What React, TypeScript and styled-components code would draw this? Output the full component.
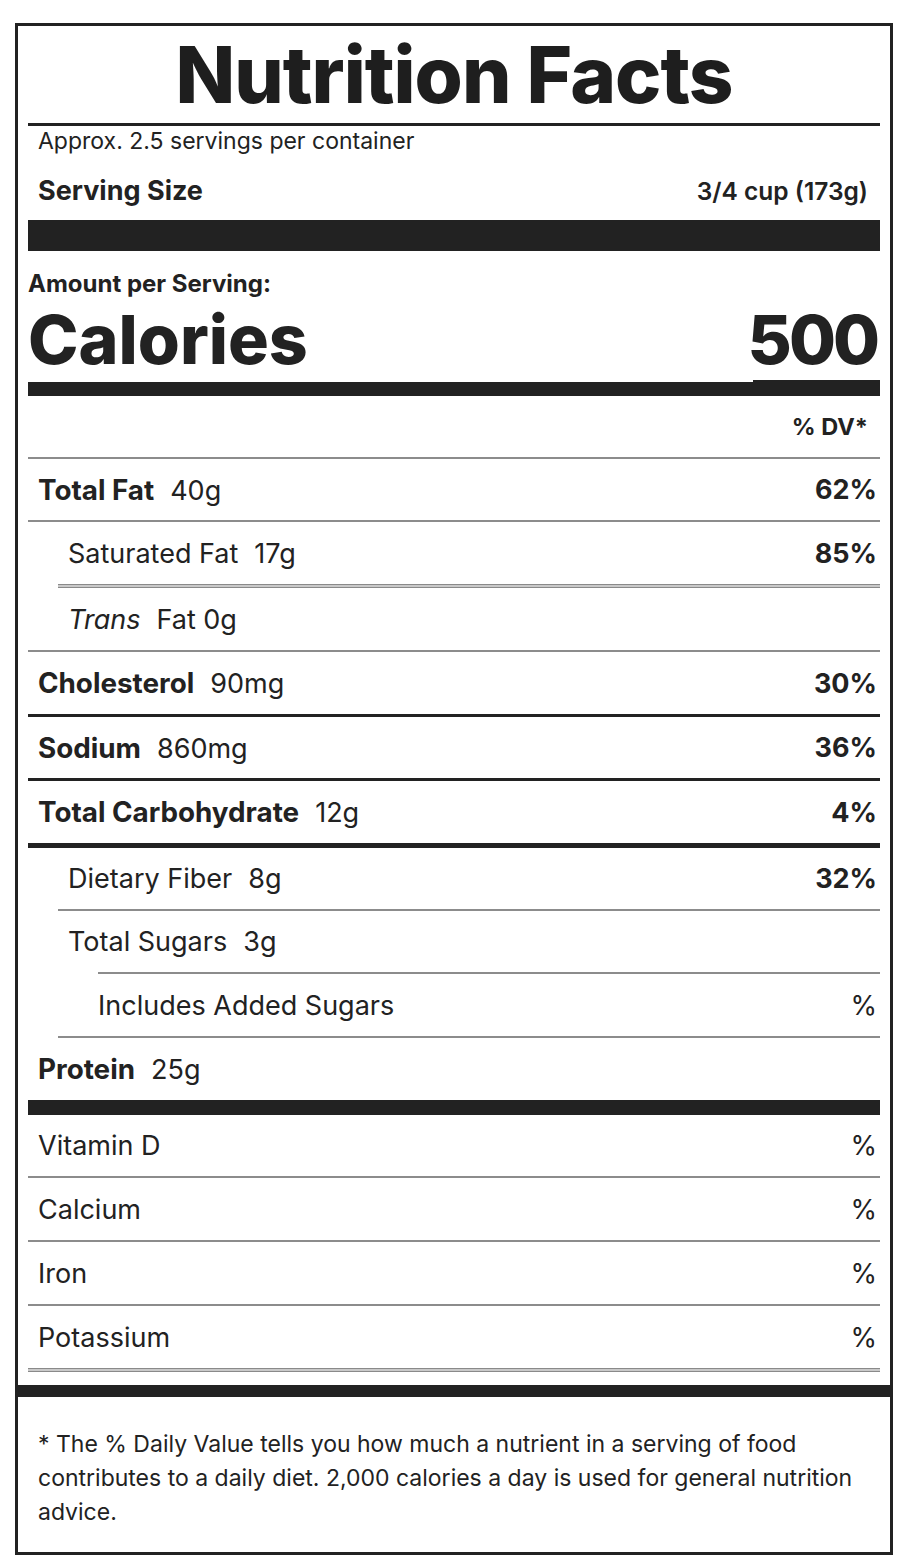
import React from "react";
import styled, { createGlobalStyle } from "styled-components";

const GlobalStyle = createGlobalStyle`
  html, body {
    margin: 0;
    padding: 0;
    background: #ffffff;
  }
  body {
    font-family: Inter, "Liberation Sans", Arial, sans-serif;
    color: #222222;
  }
  * { box-sizing: border-box; }
`;

const Page = styled.div`
  padding: 23px 21px 9px 15px;
`;

const Label = styled.div`
  width: 878px;
  border: 3px solid #222;
  background: #fff;
`;

const Body = styled.div`
  padding: 0 10px;
`;

const Title = styled.h1`
  margin: 0;
  height: 97px;
  line-height: 97px;
  text-align: center;
  font-size: 78px;
  font-weight: 800;
  letter-spacing: -1px;
  color: #1e1e1e;
`;

const Rule = styled.div<{ $h: number; $color?: string; $inset?: number }>`
  height: ${(p) => p.$h}px;
  background: ${(p) => p.$color ?? "#222"};
  margin-left: ${(p) => p.$inset ?? 0}px;
`;

const DoubleRule = styled.div<{ $inset?: number }>`
  height: 4px;
  border-top: 1px solid #8a8a8a;
  border-bottom: 1px solid #8a8a8a;
  background: #c9c9c9;
  margin-left: ${(p) => p.$inset ?? 0}px;
`;

const Servings = styled.div`
  padding-left: 10px;
  font-size: 23px;
  line-height: 30px;
  height: 30px;
`;

const ServingRow = styled.div`
  display: flex;
  justify-content: space-between;
  align-items: baseline;
  padding: 6px 12px 0 10px;
  height: 64px;
  line-height: 58px;
  font-size: 27px;
  font-weight: 700;
`;

const ServingValue = styled.span`
  font-size: 24.5px;
  font-weight: 600;
`;

const AmountLabel = styled.div`
  padding-top: 18px;
  font-size: 24px;
  line-height: 30px;
  font-weight: 700;
`;

const CaloriesRow = styled.div`
  display: flex;
  justify-content: space-between;
  align-items: baseline;
  padding-top: 5px;
  height: 81px;
  line-height: 70px;
  font-size: 68px;
  font-weight: 800;
`;

const CaloriesValue = styled.span`
  letter-spacing: -3px;
  margin-right: 3px;
`;

const StepBar = styled.div`
  display: flex;
  align-items: flex-end;
  height: 16px;
`;

const StepLeft = styled.div`
  flex: 1;
  height: 14px;
  background: #222;
`;

const StepRight = styled.div`
  width: 127px;
  height: 16px;
  background: #222;
`;

const DvHeader = styled.div`
  height: 61px;
  line-height: 61px;
  text-align: right;
  padding-right: 12px;
  font-size: 23.5px;
  font-weight: 700;
`;

const Row = styled.div<{ $indent: number; $h: number }>`
  display: flex;
  align-items: center;
  justify-content: space-between;
  height: ${(p) => p.$h}px;
  padding-left: ${(p) => 10 + p.$indent * 30}px;
  padding-right: 3px;
  font-size: 27px;
`;

const Name = styled.span<{ $bold?: boolean }>`
  font-weight: ${(p) => (p.$bold ? 700 : 400)};
  font-size: ${(p) => (p.$bold ? "27.8px" : "27px")};
`;

const Italic = styled.span`
  font-style: italic;
  margin-right: 16px;
`;

const Amount = styled.span`
  margin-left: 16px;
  font-weight: 400;
`;

const Percent = styled.span<{ $bold?: boolean }>`
  font-weight: ${(p) => (p.$bold ? 700 : 400)};
`;

const Footnote = styled.div`
  border-top: 12px solid #222;
  margin-top: 13px;
  padding: 30px 20px 23px 20px;
  font-size: 23px;
  line-height: 34px;
`;

type Line = "gray" | "double" | "black3" | "black5" | "bar";

interface Item {
  name: React.ReactNode;
  bold?: boolean;
  amount?: string;
  pct?: string;
  pctBold?: boolean;
  indent: number;
  line: Line;
  inset?: number;
  h: number;
}

const nutrients: Item[] = [
  { name: "Total Fat", bold: true, amount: "40g", pct: "62%", pctBold: true, indent: 0, line: "gray", h: 61 },
  { name: "Saturated Fat", amount: "17g", pct: "85%", pctBold: true, indent: 1, line: "double", inset: 30, h: 62 },
  { name: <><Italic>Trans</Italic>Fat 0g</>, indent: 1, line: "gray", h: 62 },
  { name: "Cholesterol", bold: true, amount: "90mg", pct: "30%", pctBold: true, indent: 0, line: "black3", h: 62 },
  { name: "Sodium", bold: true, amount: "860mg", pct: "36%", pctBold: true, indent: 0, line: "black3", h: 61 },
  { name: "Total Carbohydrate", bold: true, amount: "12g", pct: "4%", pctBold: true, indent: 0, line: "black5", h: 62 },
  { name: "Dietary Fiber", amount: "8g", pct: "32%", pctBold: true, indent: 1, line: "gray", inset: 30, h: 61 },
  { name: "Total Sugars", amount: "3g", indent: 1, line: "gray", inset: 70, h: 61 },
  { name: "Includes Added Sugars", pct: "%", indent: 2, line: "gray", inset: 30, h: 62 },
  { name: "Protein", bold: true, amount: "25g", indent: 0, line: "bar", h: 62 },
];

const vitamins: Item[] = [
  { name: "Vitamin D", pct: "%", indent: 0, line: "gray", h: 61 },
  { name: "Calcium", pct: "%", indent: 0, line: "gray", h: 62 },
  { name: "Iron", pct: "%", indent: 0, line: "gray", h: 62 },
  { name: "Potassium", pct: "%", indent: 0, line: "double", h: 62 },
];

function Divider({ line, inset }: { line: Line; inset?: number }) {
  switch (line) {
    case "gray":
      return <Rule $h={2} $color="#8c8c8c" $inset={inset} />;
    case "double":
      return <DoubleRule $inset={inset} />;
    case "black3":
      return <Rule $h={3} $inset={inset} />;
    case "black5":
      return <Rule $h={5} $inset={inset} />;
    case "bar":
      return <Rule $h={15} $inset={inset} />;
  }
}

function NutrientRow({ item }: { item: Item }) {
  return (
    <>
      <Row $indent={item.indent} $h={item.h}>
        <span>
          <Name $bold={item.bold}>{item.name}</Name>
          {item.amount && <Amount>{item.amount}</Amount>}
        </span>
        {item.pct && <Percent $bold={item.pctBold}>{item.pct}</Percent>}
      </Row>
      <Divider line={item.line} inset={item.inset} />
    </>
  );
}

export default function App() {
  return (
    <Page>
      <GlobalStyle />
      <Label>
        <Body>
          <Title>Nutrition Facts</Title>
          <Rule $h={3} />
          <Servings>Approx. 2.5 servings per container</Servings>
          <ServingRow>
            <span>Serving Size</span>
            <ServingValue>3/4 cup (173g)</ServingValue>
          </ServingRow>
          <Rule $h={31} />
          <AmountLabel>Amount per Serving:</AmountLabel>
          <CaloriesRow>
            <span>Calories</span>
            <CaloriesValue>500</CaloriesValue>
          </CaloriesRow>
          <StepBar>
            <StepLeft />
            <StepRight />
          </StepBar>
          <DvHeader>% DV*</DvHeader>
          <Rule $h={2} $color="#8c8c8c" />
          {nutrients.map((n, i) => (
            <NutrientRow key={i} item={n} />
          ))}
          {vitamins.map((n, i) => (
            <NutrientRow key={i} item={n} />
          ))}
        </Body>
        <Footnote>
          * The % Daily Value tells you how much a nutrient in a serving of food contributes to a daily
          diet. 2,000 calories a day is used for general nutrition advice.
        </Footnote>
      </Label>
    </Page>
  );
}
